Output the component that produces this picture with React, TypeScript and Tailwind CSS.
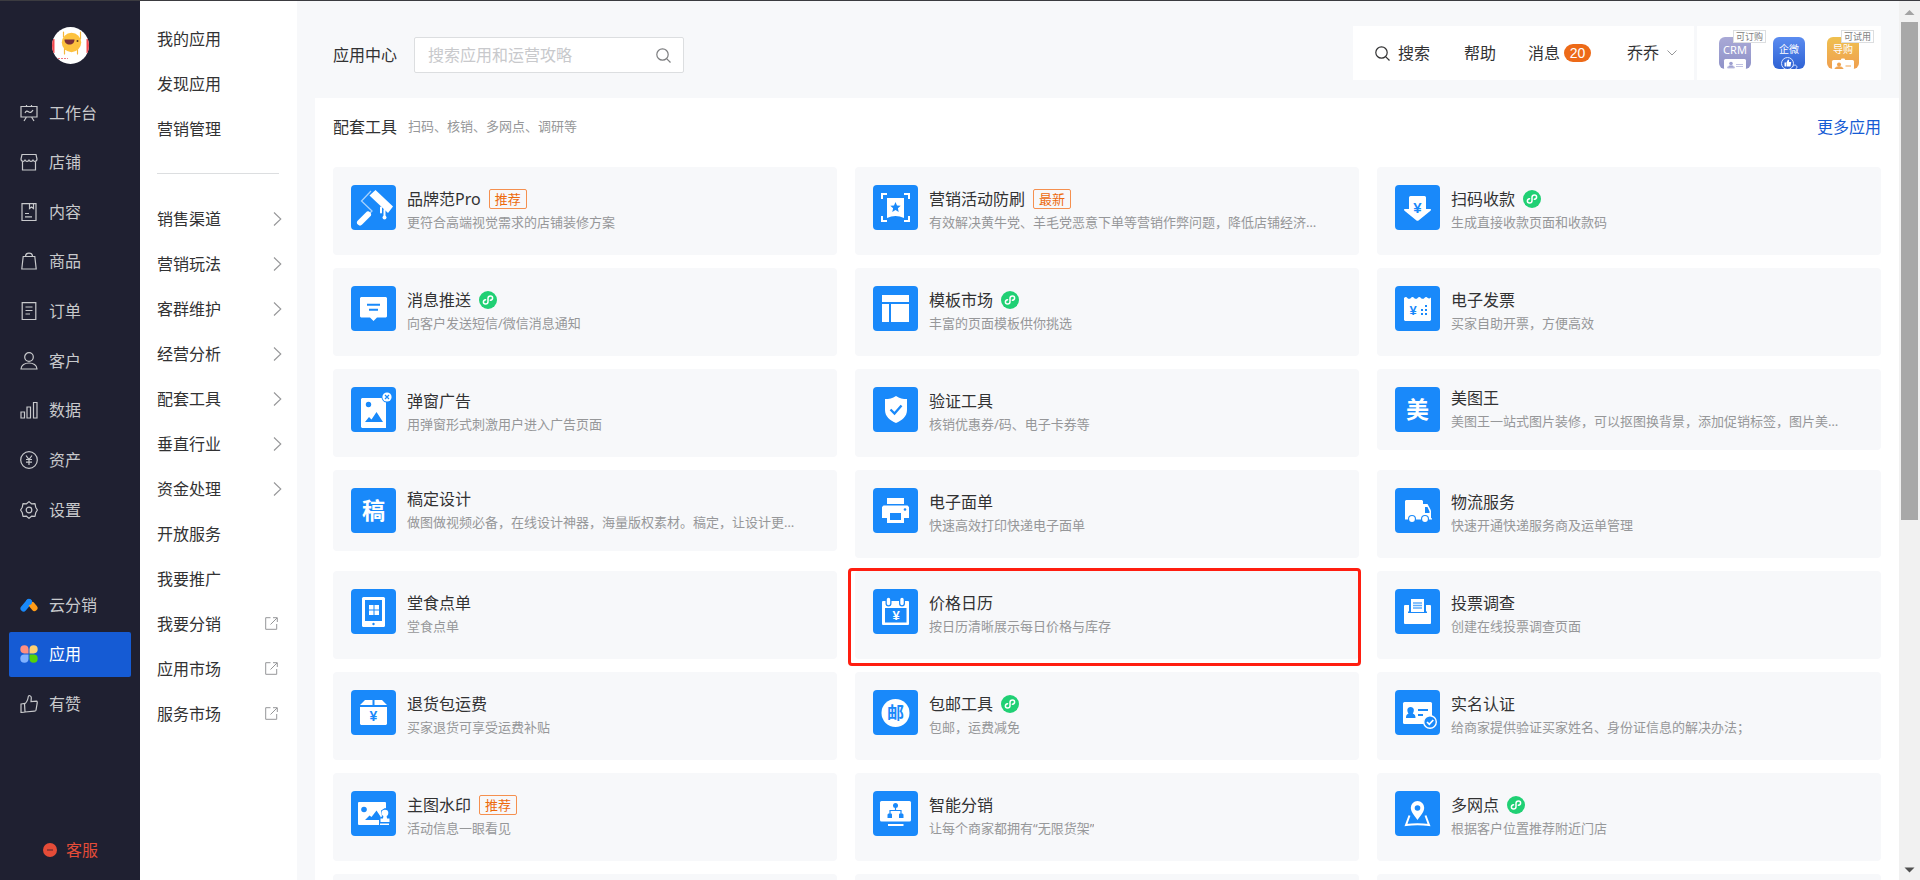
import React from 'react';

type IconProps = { children: React.ReactNode };

const BLUE = '#1989fa';

const LineIcon = ({ children }: IconProps) => (
  <svg className="h-[18px] w-[18px] shrink-0" viewBox="0 0 18 18" fill="none" stroke="currentColor" strokeWidth="1.2">
    {children}
  </svg>
);

const Tile = ({ children }: IconProps) => (
  <svg className="h-[45px] w-[45px] shrink-0 rounded bg-[#1989fa]" viewBox="0 0 45 45" fill="#fff">
    {children}
  </svg>
);

const Yen = ({ x, y, size, color }: { x: number; y: number; size: number; color: string }) => (
  <text x={x} y={y} fontSize={size} fill={color} textAnchor="middle" className="font-['Liberation_Sans'] font-bold">
    ¥
  </text>
);

const Han = ({ y, size, color, text }: { y: number; size: number; color: string; text: string }) => (
  <text x="22.5" y={y} fontSize={size} fill={color} textAnchor="middle" className="font-bold">
    {text}
  </text>
);

const Chevron = () => (
  <svg className="mr-[15px] h-4 w-[9px]" viewBox="0 0 9 16" fill="none" stroke="#969799" strokeWidth="1.1">
    <path d="M1 1.5 7.8 8 1 14.5" />
  </svg>
);

const External = () => (
  <svg className="mr-[19px] h-[13px] w-[13px]" viewBox="0 0 13 13" fill="none" stroke="#969799" strokeWidth="1">
    <path d="M5.5 .7H.7v11.6h11V7M5.5 7.5l6.500-6.500M8 .7h4.300V5" />
  </svg>
);

const SearchIcon = ({ color }: { color: string }) => (
  <svg className="h-[15px] w-[15px]" viewBox="0 0 15 15" fill="none" stroke={color} strokeWidth="1.2">
    <circle cx="6.5" cy="6.5" r="5.7" />
    <path d="m10.6 10.6 3.9 3.9" />
  </svg>
);

const MiniProgram = () => (
  <svg className="ml-2 h-[18px] w-[18px]" viewBox="0 0 18 18" fill="none">
    <circle cx="9" cy="9" r="9" fill="#20d074" />
    <path
      d="M6.600 8.700C5.200 8.900 4.400 9.700 4.400 11c0 1.200 1 2 2.100 2 1.400 0 2.500-1 2.500-2.300V7.300C9 6 10.100 5 11.500 5c1.100 0 2.100.8 2.100 2 0 1.300-.8 2.100-2.200 2.300"
      stroke="#fff"
      strokeWidth="1.500"
      strokeLinecap="round"
    />
  </svg>
);

const mainMenu = [
  { name: '工作台', icon: <path d="M1 2.500h16v10.500H1zM6.500 2.500V1M11.500 2.500V1M6.500 13l-2.500 4M11.500 13l2.500 4M5 9c1-2 2-2.500 3.500-1.200S11.500 8.500 13 6" /> },
  { name: '店铺', icon: <path d="M2 1.500h14L17 6c0 3-4 3-4 .5 0 2.500-4 2.500-4 0 0 2.500-4 2.500-4 0C5 9 1 9 1 6zM2.500 8.500v8.500h13V8.500" /> },
  { name: '内容', icon: <path d="M2 .6h14v17H2zM9.500.6v5l2-1.500 2 1.500v-5M5 10.500h4M5 13.800h7" /> },
  { name: '商品', icon: <path d="M3.200 4.500h11.600l1.400 12.500H1.800zM5.500 4.500C5.500 0 12.500 0 12.500 4.500" /> },
  { name: '订单', icon: <path d="M2.200.6h13.600v17H2.200zM5.500 5h7M5.500 8.500h7M5.500 12h4.500" /> },
  {
    name: '客户',
    icon: (
      <>
        <circle cx="9" cy="5" r="4.300" />
        <path d="M1 17c0-8 16-8 16 0z" />
      </>
    ),
  },
  { name: '数据', icon: <path d="M1 11h3.500v6H1zM7 6h3.500v11H7zM13.500 1.500H17V17h-3.500z" /> },
  {
    name: '资产',
    icon: (
      <>
        <circle cx="9" cy="9" r="8.300" />
        <path d="M6 4.500 9 8.500l3-4M9 8.500v5.500M6 8.500h6M6 11.200h6" />
      </>
    ),
  },
  {
    name: '设置',
    icon: (
      <>
        <circle cx="9" cy="9" r="2.800" />
        <path
          d="M9 .6 11.500 2.800 15 2.600 15.700 6.200 17.400 9 15.700 11.800 15 15.400 11.500 15.200 9 17.400 6.500 15.200 3 15.400 2.300 11.800.6 9 2.300 6.200 3 2.600 6.500 2.800z"
          strokeLinejoin="round"
        />
      </>
    ),
  },
];

const extraMenu = [
  {
    name: '云分销',
    active: false,
    icon: (
      <>
        <path d="M3.500 12.500 9 6" stroke="#1989fa" strokeWidth="6" strokeLinecap="round" />
        <path d="m12 9 2.500 3" stroke="#ff9c19" strokeWidth="6" strokeLinecap="round" />
        <circle cx="9" cy="6" r="3" fill="#1989fa" stroke="none" />
      </>
    ),
  },
  {
    name: '应用',
    active: true,
    icon: (
      <g stroke="none">
        <path d="M8.500 8.500H4.300A4.100 4.100 0 1 1 8.500 4.300z" fill="#ff8f80" />
        <path d="M9.500 8.500h4.200a4.100 4.100 0 1 0-4.200-4.200z" fill="#ffd073" />
        <path d="M8.500 9.500H4.300a4.100 4.100 0 1 0 4.200 4.200z" fill="#80b1ff" />
        <path d="M9.500 9.500h4.200a4.100 4.100 0 1 1-4.200 4.200z" fill="#55d20a" />
      </g>
    ),
  },
  {
    name: '有赞',
    active: false,
    icon: <path d="M1 9l3.500-.5.500 8.500-4 .500zM4.500 9C7.500 7 8 4 8.300 1.500 8.500 0 11.500.5 11.300 3L11 6.500l5.500-.3c.8 0 .8 1 .7 2l-1.200 7c-.2.800-.8 1-1.500 1L5 17" />,
  },
];

const appMenu = ['我的应用', '发现应用', '营销管理'];

const categoryMenu = [
  { name: '销售渠道', mark: 'arrow' },
  { name: '营销玩法', mark: 'arrow' },
  { name: '客群维护', mark: 'arrow' },
  { name: '经营分析', mark: 'arrow' },
  { name: '配套工具', mark: 'arrow' },
  { name: '垂直行业', mark: 'arrow' },
  { name: '资金处理', mark: 'arrow' },
  { name: '开放服务', mark: '' },
  { name: '我要推广', mark: '' },
  { name: '我要分销', mark: 'link' },
  { name: '应用市场', mark: 'link' },
  { name: '服务市场', mark: 'link' },
];

type App = {
  name: string;
  desc: string;
  icon: React.ReactNode;
  tag?: string;
  mini?: boolean;
  compact?: boolean;
  marked?: boolean;
};

const apps: App[] = [
  {
    name: '品牌范Pro',
    desc: '更符合高端视觉需求的店铺装修方案',
    tag: '推荐',
    icon: (
      <>
        <path d="m20 6-9.500 10L21 26l-4 4" fill="none" stroke="#a6d1fd" strokeWidth="1.300" />
        <path d="M24.500 5 42 21.500 37 28 18.500 10.500z" />
        <path d="M17 29.500 9 37.500" stroke="#fff" strokeWidth="6" strokeLinecap="round" />
        <path d="M33.500 25v7M30 22.500v5" stroke="#fff" strokeWidth="2" strokeLinecap="round" />
        <circle cx="33.500" cy="32.500" r="2" />
      </>
    ),
  },
  {
    name: '营销活动防刷',
    desc: '有效解决黄牛党、羊毛党恶意下单等营销作弊问题，降低店铺经济…',
    tag: '最新',
    icon: (
      <>
        <path d="M9 14V9h5M31 9h5v5M36 31v5h-5M14 36H9v-5" fill="none" stroke="#fff" strokeWidth="2" />
        <path d="M14 13h17v20q-8.500-4-17 0z" />
        <path d="m22.500 17 1.500 3.400 3.700.4-2.800 2.500.8 3.700-3.200-1.900-3.200 1.900.8-3.700-2.800-2.500 3.700-.4z" fill={BLUE} />
      </>
    ),
  },
  {
    name: '扫码收款',
    desc: '生成直接收款页面和收款码',
    mini: true,
    icon: (
      <>
        <path d="M15.500 11h14q1.500 0 1.500 1.500V24h4.500q1.200.6 0 1.700L23.500 35.500q-1 .6-2 0L9.500 25.700q-1.200-1.100 0-1.700H14V12.500q0-1.500 1.500-1.500z" />
        <Yen x={22.5} y={28} size={15} color={BLUE} />
      </>
    ),
  },
  {
    name: '消息推送',
    desc: '向客户发送短信/微信消息通知',
    mini: true,
    icon: (
      <>
        <path d="M10 11h25l1 1v18.500l-1 1H26L22.500 35 19 31.500h-9l-1-1V12z" />
        <path d="M16 18.700h13M18 23.700h9" stroke={BLUE} strokeWidth="2" />
      </>
    ),
  },
  {
    name: '模板市场',
    desc: '丰富的页面模板供你挑选',
    mini: true,
    icon: <path d="M9 9h27v7H9zM9 18h7v18H9zM18 18h18v18H18z" />,
  },
  {
    name: '电子发票',
    desc: '买家自助开票，方便高效',
    icon: (
      <>
        <path d="M9 12q2-2 3.400 0a2.100 2.100 0 0 0 3.400 0q1.600-2 3.400 0a2.100 2.100 0 0 0 3.400 0q1.600-2 3.400 0a2.100 2.100 0 0 0 3.400 0q1.600-2 3.400 0 1.500 1 3.200-.6V34l-1 1H10l-1-1z" />
        <Yen x={18} y={29} size={13} color={BLUE} />
        <path d="M30 19h2v2h-2zM26 23h2v2h-2zM30 23h2v2h-2zM26 27h2v2h-2zM30 27h2v2h-2z" fill={BLUE} />
      </>
    ),
  },
  {
    name: '弹窗广告',
    desc: '用弹窗形式刺激用户进入广告页面',
    icon: (
      <>
        <path d="M11 11h24v30H11l-1-1V12z" />
        <circle cx="17.500" cy="17.500" r="2.700" fill={BLUE} />
        <path d="m14 35 4-5 2.500 2.500 5-7.500 6.500 10z" fill={BLUE} />
        <circle cx="36" cy="10" r="5.500" fill={BLUE} />
        <circle cx="36" cy="10" r="4.600" />
        <path d="m34 8 4 4M38 8l-4 4" stroke={BLUE} strokeWidth="1.200" />
      </>
    ),
  },
  {
    name: '验证工具',
    desc: '核销优惠券/码、电子卡券等',
    icon: (
      <>
        <path d="M23 9c3.500 2.500 7 3 11 3v11c0 6.500-5 10.500-11 13-6-2.500-11-6.500-11-13V12c4 0 7.500-.5 11-3z" />
        <path d="m17.500 22.500 4 4 7-8" fill="none" stroke={BLUE} strokeWidth="2.300" />
      </>
    ),
  },
  {
    name: '美图王',
    desc: '美图王一站式图片装修，可以抠图换背景，添加促销标签，图片美…',
    compact: true,
    icon: <Han y={31} size={23} color="#fff" text="美" />,
  },
  {
    name: '稿定设计',
    desc: '做图做视频必备，在线设计神器，海量版权素材。稿定，让设计更…',
    compact: true,
    icon: <Han y={31} size={23} color="#fff" text="稿" />,
  },
  {
    name: '电子面单',
    desc: '快速高效打印快递电子面单',
    icon: (
      <>
        <path d="M14 10h17v6H14zM10.500 17.500h24L36 19v11h-5v5H14v-5H9V19z" />
        <path d="M17 25h11v7H17z" fill={BLUE} />
        <circle cx="32" cy="21.500" r="1.300" fill={BLUE} />
      </>
    ),
  },
  {
    name: '物流服务',
    desc: '快速开通快递服务商及运单管理',
    icon: (
      <>
        <path d="M11 12h16l1 1v3h4.500l3 5.500.5 1.500v7l1 .5v1H10V13z" />
        <path d="M30 19h2.500l2 4.500v1.500H30z" fill={BLUE} />
        <circle cx="17" cy="31" r="4" fill={BLUE} />
        <circle cx="30" cy="31" r="4" fill={BLUE} />
        <circle cx="17" cy="31" r="2.900" />
        <circle cx="30" cy="31" r="2.900" />
      </>
    ),
  },
  {
    name: '堂食点单',
    desc: '堂食点单',
    icon: (
      <>
        <rect x="11" y="8" width="23" height="30" rx="1.500" />
        <path d="M14 11h17v21H14z" fill={BLUE} />
        <path d="M18 16h4.500v4.500H18zM23.500 16H28v4.500h-4.500zM18 21.500h4.500V26H18zM23.500 21.500H28V26h-4.500z" />
        <circle cx="22.500" cy="35" r="1.200" fill={BLUE} />
      </>
    ),
  },
  {
    name: '价格日历',
    desc: '按日历清晰展示每日价格与库存',
    marked: true,
    icon: (
      <>
        <rect x="9" y="12" width="27" height="24" rx="1" />
        <path d="M12 19h21.500v14.500H12z" fill={BLUE} />
        <path d="M15.500 11v3.500M29 11v3.500" stroke={BLUE} strokeWidth="6" strokeLinecap="round" />
        <path d="M15.500 10.500v4M29 10.500v4" stroke="#fff" strokeWidth="3.400" strokeLinecap="round" />
        <Yen x={23} y={31} size={13} color="#fff" />
      </>
    ),
  },
  {
    name: '投票调查',
    desc: '创建在线投票调查页面',
    icon: (
      <>
        <rect x="9" y="16" width="27" height="19" rx="1" />
        <path d="M14 15h17v7.500h1V24H13v-1.500h1z" fill={BLUE} />
        <path d="M16 10h13v13H16z" />
        <path d="M18 14h9M18 16.500h9M18 19h9" stroke="#5eacfb" strokeWidth="1.400" />
      </>
    ),
  },
  {
    name: '退货包运费',
    desc: '买家退货可享受运费补贴',
    icon: (
      <>
        <path d="M9 17h27v17l-1 1H10l-1-1zM14 10h7.500v5H9zM23.500 10H31l5 5H23.500z" />
        <Yen x={22.5} y={31} size={14} color={BLUE} />
      </>
    ),
  },
  {
    name: '包邮工具',
    desc: '包邮，运费减免',
    mini: true,
    icon: (
      <>
        <circle cx="22.500" cy="23" r="14" />
        <Han y={29} size={17} color={BLUE} text="邮" />
      </>
    ),
  },
  {
    name: '实名认证',
    desc: '给商家提供验证买家姓名、身份证信息的解决办法；',
    icon: (
      <>
        <rect x="8" y="12" width="29" height="22" rx="1.500" />
        <path d="M15.500 17c4 0 4 4 2.300 6.500 2 1 2.700 1.500 2.700 4.500H11c0-3 .7-3.500 2.500-4.500-1.700-2.500-1.700-6.500 2-6.500z" fill={BLUE} />
        <path d="M23 20h10M23 25h5" stroke={BLUE} strokeWidth="2" />
        <circle cx="35" cy="32" r="6.300" fill={BLUE} stroke="#fff" strokeWidth="1.400" />
        <path d="m32 32 2.300 2.300 4-4.300" fill="none" stroke="#fff" strokeWidth="1.700" />
      </>
    ),
  },
  {
    name: '主图水印',
    desc: '活动信息一眼看见',
    tag: '推荐',
    icon: (
      <>
        <rect x="7" y="11" width="28" height="23" rx="1" />
        <circle cx="13" cy="18.500" r="2.800" fill={BLUE} />
        <path d="m14 29 4.500-4.500 2 1.500 5-6.500 4 6V29z" fill={BLUE} />
        <path d="M28 35v-8l3-1.500-1-6 4-2.500 5 2v16z" fill={BLUE} />
        <circle cx="34" cy="22" r="3.300" />
        <path d="M32.500 24h3l.5 3.500h2.500V31h-9v-3.500H32zM29 32.500h9V34h-9z" />
      </>
    ),
  },
  {
    name: '智能分销',
    desc: '让每个商家都拥有“无限货架”',
    icon: (
      <>
        <rect x="7" y="10" width="31" height="20.500" rx="1.500" />
        <path d="M15 34h15.500" stroke="#fff" strokeWidth="2" />
        <path d="M22.500 14v5.500M17 24v-4.500h11V24" fill="none" stroke={BLUE} strokeWidth="1.200" />
        <circle cx="22.500" cy="14.500" r="2.500" fill={BLUE} />
        <path d="M14.500 23.500l1-1h3l.5 1V27h-4.500zM26 23.500l.5-1h3l1 1V27H26z" fill={BLUE} />
      </>
    ),
  },
  {
    name: '多网点',
    desc: '根据客户位置推荐附近门店',
    mini: true,
    icon: (
      <>
        <path d="M22.500 10a6.700 6.700 0 0 1 6.700 6.700c0 4.300-4 8.300-6.700 12.300-2.700-4-6.700-8-6.700-12.300a6.700 6.700 0 0 1 6.700-6.700z" />
        <circle cx="22.500" cy="17" r="2.800" fill={BLUE} />
        <path d="M14.500 24.500 11 34q11.500-1.500 23 0l-3.500-9.500" fill="none" stroke="#fff" strokeWidth="2" />
      </>
    ),
  },
];

const Card = ({ app }: { app: App }) => (
  <a href="#" className="relative flex gap-[11px] rounded bg-[#f7f8fa] p-[18px]">
    <Tile>{app.icon}</Tile>
    <div className={app.compact ? 'min-w-0' : 'min-w-0 pb-[6px]'}>
      <div className={app.compact ? 'mb-[3px] flex h-[22px] items-center' : 'flex h-7 items-center'}>
        <h3 className="text-base leading-[22px]">{app.name}</h3>
        {app.tag && (
          <span className="ml-2 rounded-xs border border-[#f5904f] px-[5px] text-[13px] leading-[18px] text-[#ed6a0c]">
            {app.tag}
          </span>
        )}
        {app.mini && <MiniProgram />}
      </div>
      <p className="truncate text-[13px] leading-[18px] text-[#969799]">{app.desc}</p>
    </div>
    {app.marked && (
      <span className="absolute -top-[3px] -right-[2px] -bottom-[7px] -left-[7px] rounded border-[3px] border-[#ff1e10]" />
    )}
  </a>
);

const Divider = () => <span className="h-[14px] w-px bg-[#dcdee0]" />;

const Sidebar = () => (
  <aside className="flex w-[140px] shrink-0 flex-col bg-[#1f2031] px-[9px] text-base text-[#c8c9cc]">
    <svg className="mx-auto mt-[26px] h-[37px] w-[37px] shrink-0 rounded-full bg-white" viewBox="0 0 37 37">
      <path d="M0 12h2.500v14H0zM34.500 12H37v14h-2.500z" fill="#f0484e" />
      <path d="M11.500 10V5M28.500 12V5M12.500 20v7M25.500 23v4" stroke="#f5b63c" strokeWidth="1.200" strokeLinecap="round" />
      <circle cx="19.500" cy="15.500" r="9.700" fill="#fdc23f" />
      <path d="M12.500 12.500h10c0 3-2 5-5 5s-5-1.500-5-5z" fill="#7b3038" />
      <circle cx="25.500" cy="14" r="1" fill="#5a3a20" />
      <path d="M6 31.500h10" stroke="#ee7b85" strokeWidth="1" strokeDasharray="2 1" />
    </svg>
    <nav className="mt-[26px] flex h-[442px] shrink-0 flex-col justify-between">
      {mainMenu.map((item) => (
        <a key={item.name} href="#" className="flex h-[45px] items-center gap-[11px] pl-[11px]">
          <LineIcon>{item.icon}</LineIcon>
          {item.name}
        </a>
      ))}
    </nav>
    <nav className="mt-[50px] flex h-[144px] shrink-0 flex-col justify-between">
      {extraMenu.map((item) => (
        <a
          key={item.name}
          href="#"
          className={
            item.active
              ? 'flex h-[45px] items-center gap-[11px] rounded-xs bg-[#155bd4] pl-[11px] text-white'
              : 'flex h-[45px] items-center gap-[11px] pl-[11px]'
          }
        >
          <LineIcon>{item.icon}</LineIcon>
          {item.name}
        </a>
      ))}
    </nav>
    <a href="#" className="mt-auto mb-[18px] flex items-center gap-[9px] pl-[34px] leading-6 text-[#e54c38]">
      <svg className="h-[14px] w-[14px]" viewBox="0 0 14 14">
        <circle cx="7" cy="7" r="7" fill="#e54c38" />
        <path d="M4 7h6" stroke="#6b2a30" strokeWidth="1.200" />
      </svg>
      客服
    </a>
  </aside>
);

const SubNav = () => (
  <nav className="w-[157px] shrink-0 bg-white pt-[15px] pl-[17px] text-base">
    {appMenu.map((name) => (
      <a key={name} href="#" className="flex h-[45px] items-center">
        {name}
      </a>
    ))}
    <div className="flex h-[45px] items-center pr-[18px]">
      <hr className="w-full border-[#dcdee0]" />
    </div>
    {categoryMenu.map((item) => (
      <a key={item.name} href="#" className="flex h-[45px] items-center justify-between">
        {item.name}
        {item.mark === 'arrow' && <Chevron />}
        {item.mark === 'link' && <External />}
      </a>
    ))}
  </nav>
);

const PluginIcons = () => (
  <div className="ml-[3px] flex items-center gap-[22px] bg-white px-[22px]">
    <button className="relative h-8 w-8">
      <svg className="h-8 w-8 rounded-md bg-linear-to-b from-[#a9a9d6] to-[#8f92c8]" viewBox="0 0 32 32">
        <text x="16" y="17" fontSize="11" fill="#fff" textAnchor="middle">CRM</text>
        <rect x="5" y="22" width="22" height="12" rx="1.500" fill="#fff" />
        <circle cx="12" cy="26.500" r="1.800" fill="#9ea0d0" />
        <path d="M8.500 31c0-3.500 7-3.500 7 0zM17 27.500h7M17 29.500h7" fill="#9ea0d0" stroke="#c2c3e2" strokeWidth="1" />
      </svg>
      <span className="absolute -top-[7px] left-[14px] border border-[#dcdee0] bg-white px-[2px] text-[9px] leading-[11px] whitespace-nowrap text-[#7d7e80]">
        可订购
      </span>
    </button>
    <button className="h-8 w-8">
      <svg className="h-8 w-8 rounded-md bg-linear-to-b from-[#5b8cf0] to-[#2f62d4]" viewBox="0 0 32 32">
        <text x="16" y="16" fontSize="10" fill="#fff" textAnchor="middle">企微</text>
        <circle cx="14.500" cy="26.500" r="6" fill="none" stroke="#dbe6ff" strokeWidth="1" />
        <path d="M11.500 25.500h1.500v4h-1.500zM13.500 25.500l1.500-3 1 .5v2h2.200l-.7 4.500h-4z" fill="#fff" />
        <path d="M20 29.500a2 2 0 1 1 2.500 2.500" fill="none" stroke="#dbe6ff" />
      </svg>
    </button>
    <button className="relative h-8 w-8">
      <svg className="h-8 w-8 rounded-md bg-linear-to-b from-[#efc04f] to-[#ef9f4f]" viewBox="0 0 32 32">
        <text x="16" y="16" fontSize="10" fill="#fff" textAnchor="middle">导购</text>
        <rect x="5" y="23" width="22" height="12" rx="1.500" fill="#fff" />
        <rect x="14" y="21.500" width="4" height="3" rx="1" fill="#fff" />
        <circle cx="12" cy="27.500" r="2" fill="#efa350" />
        <path d="M8 32c0-3 8-3 8 0zM18.500 29H24" fill="#efa350" stroke="#efa350" strokeWidth="1" />
      </svg>
      <span className="absolute -top-[7px] left-[14px] border border-[#dcdee0] bg-white px-[2px] text-[9px] leading-[11px] whitespace-nowrap text-[#7d7e80]">
        可试用
      </span>
    </button>
  </div>
);

const Header = () => (
  <header className="flex h-[97px] shrink-0 items-start pt-[25px] pr-[18px] pl-9 text-base">
    <div className="mt-[11px] flex items-center gap-[17px]">
      <label htmlFor="app-search">应用中心</label>
      <div className="flex h-9 w-[270px] items-center rounded-xs border border-[#dcdee0] bg-white pr-3 pl-[13px]">
        <input
          id="app-search"
          type="text"
          placeholder="搜索应用和运营攻略"
          className="min-w-0 flex-1 bg-transparent outline-none placeholder:text-[#c8c9cc]"
        />
        <SearchIcon color="#7d7e80" />
      </div>
    </div>
    <div className="ml-auto flex h-[54px]">
      <div className="flex items-center bg-white pr-[17px] pl-[22px]">
        <button className="flex items-center gap-2">
          <SearchIcon color="#323233" />
          搜索
        </button>
        <span className="px-[17px]"><Divider /></span>
        <button>帮助</button>
        <span className="px-4"><Divider /></span>
        <button className="flex items-center gap-1">
          消息
          <span className="h-[18px] w-[27px] rounded-full bg-[#ed6a18] text-center font-['Liberation_Sans'] text-sm leading-[18px] text-white">
            20
          </span>
        </button>
        <span className="px-[18px]"><Divider /></span>
        <button className="flex items-center gap-2">
          乔乔
          <svg className="h-[6px] w-[10px]" viewBox="0 0 10 6" fill="none" stroke="#969799">
            <path d="m.5.5 4.500 4.500L9.500.5" />
          </svg>
        </button>
      </div>
      <PluginIcons />
    </div>
  </header>
);

const Scrollbar = () => (
  <div className="flex w-[21px] shrink-0 flex-col bg-[#f1f1f1] px-[2px]">
    <svg className="h-[21px] w-[17px] shrink-0" viewBox="0 0 17 21" fill="#a3a3a3">
      <path d="m8.500 9 5 5h-10z" />
    </svg>
    <div className="h-[498px] bg-[#a8a8a8]" />
    <svg className="mt-auto h-[21px] w-[17px] shrink-0" viewBox="0 0 17 21" fill="#505050">
      <path d="m8.500 13.500 5-5h-10z" />
    </svg>
  </div>
);

const App = () => {
  return (
    <div className="flex h-screen overflow-hidden border-t border-[#3b3b40] bg-[#f7f8fa] font-['Noto_Sans','Noto_Sans_CJK_SC',sans-serif] text-[#323233]">
      <Sidebar />
      <SubNav />
      <div className="flex min-w-0 flex-1 flex-col">
        <Header />
        <main className="ml-[18px] bg-white px-[18px] pt-4 pb-4">
          <div className="flex items-center">
            <h2 className="text-base leading-[26px]">配套工具</h2>
            <p className="ml-[11px] text-[13px] text-[#969799]">扫码、核销、多网点、调研等</p>
            <a href="#" className="ml-auto text-base leading-[26px] text-[#155bd4]">更多应用</a>
          </div>
          <div className="mt-[27px] grid grid-cols-3 items-start gap-x-[18px] gap-y-[13px]">
            {apps.map((app) => (
              <Card key={app.name} app={app} />
            ))}
            <div className="h-[88px] rounded bg-[#f7f8fa]" />
            <div className="h-[88px] rounded bg-[#f7f8fa]" />
            <div className="h-[88px] rounded bg-[#f7f8fa]" />
          </div>
        </main>
      </div>
      <Scrollbar />
    </div>
  );
};

export default App;
